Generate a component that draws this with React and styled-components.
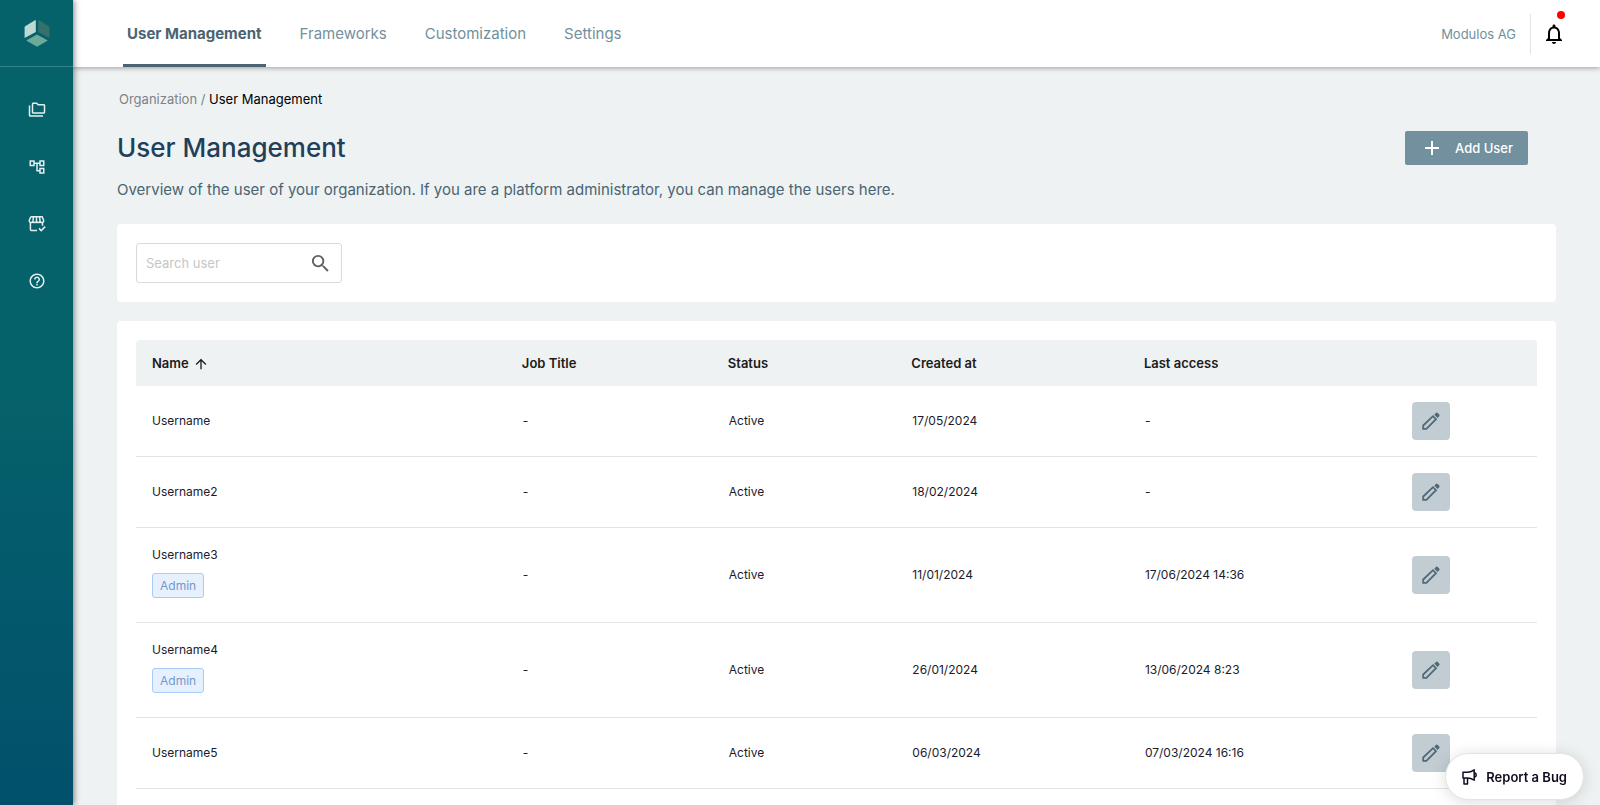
import React from "react";
import styled, { createGlobalStyle } from "styled-components";
import {
  MdAdd,
  MdArrowUpward,
  MdHelpOutline,
  MdNotificationsNone,
  MdOutlineAccountTree,
  MdOutlineFolderCopy,
  MdSearch,
} from "react-icons/md";

const navLinks = ["User Management", "Frameworks", "Customization", "Settings"];

const columns = [
  { label: "Name", width: "26.4%", sorted: true },
  { label: "Job Title", width: "14.7%" },
  { label: "Status", width: "13.1%" },
  { label: "Created at", width: "16.6%" },
  { label: "Last access", width: "19.1%" },
];

const users = [
  { name: "Username", created: "17/05/2024", access: "-" },
  { name: "Username2", created: "18/02/2024", access: "-" },
  { name: "Username3", admin: true, created: "11/01/2024", access: "17/06/2024 14:36" },
  { name: "Username4", admin: true, created: "26/01/2024", access: "13/06/2024 8:23" },
  { name: "Username5", created: "06/03/2024", access: "07/03/2024 16:16" },
  { name: "Username6", created: "06/03/2024", access: "-" },
];

const Logo = () => (
  <svg width="26" height="28" viewBox="0 0 26 28" aria-hidden="true">
    <path d="M1.5 7 L11 1.200 Q11.800 .8 11.800 1.600 V13 L.6 19 V8.200 Q.6 7.500 1.500 7Z" fill="#bcdad2" />
    <path d="M24.500 7 L15 1.200 Q14.200 .8 14.200 1.600 V13 L25.400 19 V8.200 Q25.400 7.500 24.500 7Z" fill="#36706c" />
    <path d="M13 15.500 L23.800 21.400 L13.900 27.200 Q13 27.700 12.100 27.200 L2.200 21.400Z" fill="#6cab9c" />
  </svg>
);

const StoreCheck = () => (
  <svg width="18" height="18" viewBox="0 0 18 18" fill="none" stroke="currentColor" strokeWidth="1.5" aria-hidden="true">
    <path d="M2.800 1.700h11.400l1.400 3.600c.3 1.300-.6 2.300-1.800 2.300s-1.800-.9-1.800-1.900c0 1-.8 1.900-1.800 1.900s-1.700-.9-1.700-1.900c0 1-.8 1.900-1.800 1.900s-1.800-.9-1.800-1.900c0 1-.8 1.900-1.800 1.900s-2.100-1-1.800-2.300L2.800 1.700M5.500 1.700l-.5 4M8.500 1.700v4M11.600 1.700l.4 4" />
    <path d="M2.400 7.500v7c0 .6.400 1 1 1h5.600M14.500 7.500v3.200" />
    <path d="M11 13.400l2.200 2.200 4-4" />
  </svg>
);

const Pencil = () => (
  <svg width="18" height="18" viewBox="0 0 18 18" aria-hidden="true">
    <path d="M1.200 16.800V13.500L11 4.200L14 7.200L4.400 16.800Z" fill="none" stroke="currentColor" strokeWidth="1.8" />
    <path d="M12.300 2.700L13.600 1.200Q14.700 0 16 1.200L17 2.300Q18.100 3.500 17 4.600L15.600 6Z" fill="currentColor" />
  </svg>
);

const Megaphone = () => (
  <svg width="16" height="16" viewBox="0 0 16 16" fill="none" stroke="currentColor" strokeWidth="1.5" strokeLinejoin="round" aria-hidden="true">
    <path d="M1 3.200h4.500Q8.500 3.200 12.200.8v10.400Q8.500 9 5.500 9H1Z" />
    <path d="M2 9v6h3.500V9M12.600 3.800a2.300 2.300 0 0 1 0 4.400" />
  </svg>
);

const App = () => {
  return (
    <>
      <GlobalStyle />
      <Layout>
        <Sidebar>
          <LogoLink href="#home" aria-label="Modulos">
            <Logo />
          </LogoLink>
          <SideNav aria-label="Main">
            <a href="#projects" aria-label="Projects"><MdOutlineFolderCopy /></a>
            <a href="#structure" aria-label="Structure"><MdOutlineAccountTree /></a>
            <a href="#marketplace" aria-label="Marketplace"><StoreCheck /></a>
            <a href="#help" aria-label="Help"><MdHelpOutline /></a>
          </SideNav>
        </Sidebar>

        <Page>
          <Header>
            <Tabs>
              {navLinks.map((label, index) => (
                <Tab key={label} href="#tab" $active={index === 0}>
                  {label}
                </Tab>
              ))}
            </Tabs>
            <Account>
              <span>Modulos AG</span>
              <BellButton aria-label="Notifications">
                <MdNotificationsNone />
                <Dot />
              </BellButton>
            </Account>
          </Header>

          <Content>
            <Breadcrumb>
              <a href="#organization">Organization</a> / <b>User Management</b>
            </Breadcrumb>
            <TitleRow>
              <h1>User Management</h1>
              <AddButton>
                <MdAdd />
                Add User
              </AddButton>
            </TitleRow>
            <Intro>
              Overview of the user of your organization. If you are a platform administrator, you can manage the users here.
            </Intro>

            <Card>
              <SearchBox>
                <input type="text" placeholder="Search user" aria-label="Search user" />
                <MdSearch />
              </SearchBox>
            </Card>

            <Card>
              <Table>
                <thead>
                  <tr>
                    {columns.map((column) => (
                      <HeadCell key={column.label} $width={column.width}>
                        {column.label}
                        {column.sorted && <MdArrowUpward />}
                      </HeadCell>
                    ))}
                    <HeadCell aria-label="Actions" />
                  </tr>
                </thead>
                <tbody>
                  {users.map((user) => (
                    <Row key={user.name} $tall={user.admin}>
                      <td>
                        {user.name}
                        {user.admin && <Badge>Admin</Badge>}
                      </td>
                      <td>-</td>
                      <td>Active</td>
                      <td>{user.created}</td>
                      <td>{user.access}</td>
                      <td>
                        <EditButton aria-label={`Edit ${user.name}`}>
                          <Pencil />
                        </EditButton>
                      </td>
                    </Row>
                  ))}
                </tbody>
              </Table>
            </Card>
          </Content>
        </Page>
      </Layout>
      <BugButton>
        <Megaphone />
        Report a Bug
      </BugButton>
    </>
  );
};

const GlobalStyle = createGlobalStyle`
  * {
    box-sizing: border-box;
  }

  body {
    margin: 0;
    background-color: #eef2f3;
    font-family: Inter, "Liberation Sans", sans-serif;
    font-size: 13px;
    color: #1b1b2b;
  }

  a {
    color: inherit;
    text-decoration: none;
  }

  button {
    font-family: inherit;
    border: none;
    cursor: pointer;
  }
`;

const Layout = styled.div`
  display: flex;
  height: 100vh;
`;

const Sidebar = styled.aside`
  display: flex;
  flex-direction: column;
  flex: 0 0 73px;
  color: #e3eff0;
  background: linear-gradient(180deg, #05616a 0%, #05616a 50%, #02506c 100%);
  box-shadow: 1px 0 6px rgba(0, 0, 0, 0.5);
  z-index: 2;
`;

const LogoLink = styled.a`
  display: flex;
  align-items: center;
  justify-content: center;
  height: 67px;
  border-bottom: 1px solid #38808a;
`;

const SideNav = styled.nav`
  display: flex;
  flex-direction: column;
  align-items: center;
  gap: 39px;
  padding-top: 34px;

  a {
    display: flex;
  }

  svg {
    width: 18px;
    height: 18px;
  }
`;

const Page = styled.div`
  display: flex;
  flex-direction: column;
  flex: 1;
  min-width: 0;
`;

const Header = styled.header`
  display: flex;
  justify-content: space-between;
  flex: 0 0 67px;
  padding: 0 34px 0 50px;
  background-color: #fff;
  box-shadow: 0 1px 5px rgba(0, 0, 0, 0.35);
  z-index: 1;
`;

const Tabs = styled.nav`
  display: flex;
  gap: 30px;
`;

const Tab = styled.a`
  display: flex;
  align-items: center;
  padding: 2px 4px 0;
  border-bottom: 3px solid ${({ $active }) => ($active ? "#4a6472" : "transparent")};
  font-size: 15px;
  font-weight: ${({ $active }) => ($active ? 700 : 400)};
  color: ${({ $active }) => ($active ? "#4a6472" : "#72909d")};
`;

const Account = styled.div`
  display: flex;
  align-items: center;
  gap: 14px;
  color: #72909d;
`;

const BellButton = styled.button`
  position: relative;
  display: flex;
  align-items: center;
  height: 40px;
  padding: 0 0 0 11px;
  border-left: 1px solid #e0e4e6;
  background: none;
  color: #000;

  svg {
    width: 24px;
    height: 24px;
  }
`;

const Dot = styled.span`
  position: absolute;
  top: -3px;
  right: 1px;
  width: 8px;
  height: 8px;
  border-radius: 50%;
  background-color: #ff0000;
`;

/* the list scrolls under the header */
const Content = styled.main`
  flex: 1;
  min-height: 0;
  padding: 20px 44px;
  overflow-y: auto;
  scrollbar-width: none;
`;

const Breadcrumb = styled.nav`
  padding-left: 2px;
  line-height: 24px;
  color: #7d8285;

  b {
    font-weight: 400;
    color: #000;
  }
`;

const TitleRow = styled.div`
  display: flex;
  align-items: center;
  justify-content: space-between;
  height: 34px;
  margin-top: 20px;
  padding-right: 28px;

  h1 {
    margin: 0;
    font-size: 26px;
    line-height: 34px;
    font-weight: 500;
    color: #1f3f5b;
  }
`;

const AddButton = styled.button`
  display: flex;
  align-items: center;
  gap: 11px;
  height: 34px;
  padding: 0 15px;
  border-radius: 2px;
  background-color: #72909d;
  font-size: 13px;
  font-weight: 500;
  color: #fff;

  svg {
    width: 24px;
    height: 24px;
  }
`;

const Intro = styled.p`
  margin: 13px 0 0;
  padding-bottom: 3px;
  font-size: 15px;
  line-height: 24px;
  color: #4a6472;
`;

const Card = styled.section`
  margin-top: 19px;
  padding: 19px;
  border-radius: 4px;
  background-color: #fff;
`;

const SearchBox = styled.label`
  display: flex;
  align-items: center;
  width: 206px;
  height: 40px;
  padding: 0 9px;
  border: 1px solid #dadada;
  border-radius: 3px;
  color: #616161;

  input {
    flex: 1;
    min-width: 0;
    padding: 0;
    border: none;
    outline: none;
    font-family: inherit;
    font-size: 13px;
  }

  input::placeholder {
    color: #c6c6c6;
  }

  svg {
    width: 23px;
    height: 23px;
  }
`;

const Table = styled.table`
  width: 100%;
  table-layout: fixed;
  border-collapse: separate;
  border-spacing: 0;

  td {
    padding: 0 17px;
    border-bottom: 1px solid #e2e3e4;
    font-size: 12px;
    line-height: 18px;
  }

  td:first-child {
    padding-left: 16px;
  }
`;

const HeadCell = styled.th`
  width: ${({ $width }) => $width};
  height: 46px;
  padding: 0 16px;
  background-color: #eef2f3;
  font-size: 13px;
  font-weight: 600;
  text-align: left;
  color: #1b1b1b;

  &:first-child {
    border-top-left-radius: 4px;
  }

  &:last-child {
    border-top-right-radius: 4px;
  }

  svg {
    width: 16px;
    height: 16px;
    margin-left: 4px;
    vertical-align: -4px;
  }
`;

const Row = styled.tr`
  height: ${({ $tall }) => ($tall ? "95px" : "71px")};
`;

const Badge = styled.span`
  display: block;
  width: fit-content;
  margin: 9px 0 6px;
  padding: 3px 7px;
  border: 1px solid #a9cbf7;
  border-radius: 3px;
  background-color: #e7f1fe;
  line-height: 17px;
  color: #7398cc;
`;

const EditButton = styled.button`
  display: flex;
  align-items: center;
  justify-content: center;
  width: 38px;
  height: 38px;
  padding: 0;
  border-radius: 4px;
  background-color: #c1cdd3;
  color: #526a77;
`;

const BugButton = styled.button`
  position: fixed;
  right: 16px;
  bottom: 5px;
  display: flex;
  align-items: center;
  gap: 8px;
  height: 47px;
  padding: 0 16px;
  border: 1px solid #e3e3e3;
  border-radius: 24px;
  background-color: #fff;
  box-shadow: 0 2px 16px rgba(0, 0, 0, 0.14);
  font-size: 13px;
  font-weight: 600;
  color: #120a1f;
  z-index: 2;
`;

export default App;
